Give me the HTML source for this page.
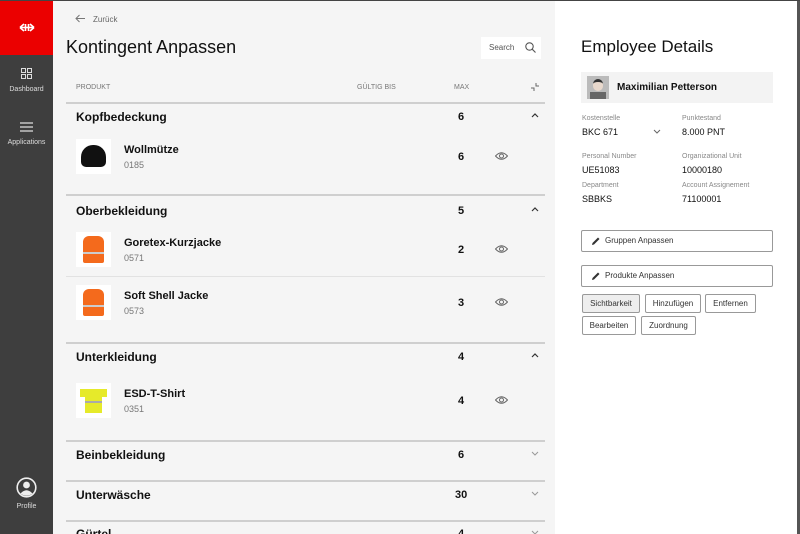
<!DOCTYPE html>
<html><head><meta charset="utf-8"><style>
*{margin:0;padding:0;box-sizing:border-box}
html{width:800px;height:534px;overflow:hidden;background:#f5f5f5}
body{width:800px;height:534px;overflow:hidden;position:relative;font-family:"Liberation Sans",sans-serif;background:#f5f5f5;color:#111}
.a{position:absolute}
.side{left:0;top:0;width:53px;height:534px;background:#3e3e3e}
.red{left:0;top:0;width:53px;height:55px;background:#eb0000}
.nav{width:53px;text-align:center;color:#ddd;font-size:7px}
.main{left:53px;top:0;width:502px;height:534px;background:#f5f5f5}
.right{left:555px;top:0;width:242px;height:534px;background:#fff}
.line{left:66px;width:479px;height:2px;background:#cfcfcf}
.thin{left:66px;width:479px;height:1px;background:#e2e2e2}
.g{font-size:12px;font-weight:bold;left:76px}
.n{font-size:11px;font-weight:bold}
.num{font-size:11px;font-weight:bold;left:458px}
.code{font-size:9px;color:#777;left:124px}
.img{left:76px;width:35px;height:35px;background:#fff}
.lbl{font-size:7px;color:#888}
.val{font-size:9px;color:#111}
.btn{border:1px solid #999;border-radius:2px;background:#fff;font-size:8px;color:#333;text-align:center;line-height:17px;height:19px}
</style></head><body>
<div class="a side"></div>
<div class="a red"></div>
<svg class="a" style="left:19px;top:23px" width="16" height="9" viewBox="0 0 16 9"><path d="M1 4.5L5 1M1 4.5L5 8M15 4.5L11 1M15 4.5L11 8M1 4.5H15M6.5 1V8M9.5 1V8" stroke="#fff" stroke-width="1.6" fill="none"/></svg>
<svg class="a" style="left:21px;top:68px" width="11" height="11" viewBox="0 0 11 11" fill="none" stroke="#ddd" stroke-width="1"><rect x=".5" y=".5" width="4" height="4"/><rect x="6.5" y=".5" width="4" height="4"/><rect x=".5" y="6.5" width="4" height="4"/><rect x="6.5" y="6.5" width="4" height="4"/></svg>
<div class="a nav" style="top:86px">Dashboard</div>
<svg class="a" style="left:20px;top:122px" width="13" height="10" viewBox="0 0 13 10" stroke="#ddd" stroke-width="1.2"><path d="M0 1H13M0 5H13M0 9H13"/></svg>
<div class="a nav" style="top:139px">Applications</div>
<svg class="a" style="left:16px;top:477px" width="21" height="21" viewBox="0 0 21 21"><circle cx="10.5" cy="10.5" r="9.3" fill="none" stroke="#eee" stroke-width="1.6"/><circle cx="10.5" cy="8" r="3.4" fill="#eee"/><path d="M4.5 16.5Q10.5 10 16.5 16.5Q10.5 21 4.5 16.5Z" fill="#eee"/></svg>
<div class="a nav" style="top:503px">Profile</div>
<div class="a main"></div>
<div class="a right"></div>
<div class="a" style="left:797px;top:0;width:3px;height:534px;background:#555"></div>
<div class="a" style="left:0;top:0;width:800px;height:1px;background:#444"></div>

<svg class="a" style="left:75px;top:14px" width="10" height="9" viewBox="0 0 10 9" fill="none" stroke="#777" stroke-width="1"><path d="M10 4.5H1M4.5 1L1 4.5L4.5 8"/></svg>
<div class="a" style="left:93px;top:15px;font-size:8px;color:#666">Zurück</div>
<div class="a" style="left:66px;top:37px;font-size:18px;color:#111">Kontingent Anpassen</div>
<div class="a" style="left:481px;top:37px;width:60px;height:22px;background:#fff"></div>
<div class="a" style="left:489px;top:43px;font-size:8px;color:#555">Search</div>
<svg class="a" style="left:525px;top:42px" width="11" height="11" viewBox="0 0 11 11" fill="none" stroke="#555" stroke-width="1.1"><circle cx="4.5" cy="4.5" r="3.7"/><path d="M7.2 7.2L10.5 10.5"/></svg>
<div class="a lbl" style="left:76px;top:84px;color:#777">PRODUKT</div>
<div class="a lbl" style="left:357px;top:84px;color:#777">GÜLTIG BIS</div>
<div class="a lbl" style="left:454px;top:84px;color:#777">MAX</div>
<svg class="a" style="left:531px;top:83px" width="8" height="8" viewBox="0 0 8 8" fill="none" stroke="#666" stroke-width="1"><path d="M0 5H3V8M5 0V3H8"/></svg>
<div class="a line" style="top:102px"></div>

<div class="a g" style="top:110px">Kopfbedeckung</div><div class="a num" style="top:111px">6</div>
<div class="a img" style="top:139px"><div style="position:absolute;left:5px;top:6px;width:25px;height:22px;background:#111;border-radius:12px 12px 5px 5px"></div></div>
<div class="a n" style="left:124px;top:144px">Wollmütze</div><div class="a code" style="top:160px">0185</div><div class="a num" style="top:151px">6</div>
<div class="a line" style="top:194px"></div>

<div class="a g" style="top:204px">Oberbekleidung</div><div class="a num" style="top:205px">5</div>
<div class="a img" style="top:232px"><div style="position:absolute;left:7px;top:4px;width:21px;height:27px;background:#f46a1c;border-radius:6px 6px 2px 2px"></div><div style="position:absolute;left:7px;top:20px;width:21px;height:2px;background:#ccc"></div></div>
<div class="a n" style="left:124px;top:237px">Goretex-Kurzjacke</div><div class="a code" style="top:253px">0571</div><div class="a num" style="top:244px">2</div>
<div class="a thin" style="top:276px"></div>
<div class="a img" style="top:285px"><div style="position:absolute;left:7px;top:4px;width:21px;height:27px;background:#f46a1c;border-radius:6px 6px 2px 2px"></div><div style="position:absolute;left:7px;top:20px;width:21px;height:2px;background:#ccc"></div></div>
<div class="a n" style="left:124px;top:290px">Soft Shell Jacke</div><div class="a code" style="top:306px">0573</div><div class="a num" style="top:297px">3</div>
<div class="a line" style="top:342px"></div>

<div class="a g" style="top:350px">Unterkleidung</div><div class="a num" style="top:351px">4</div>
<div class="a img" style="top:383px"><div style="position:absolute;left:4px;top:6px;width:27px;height:8px;background:#e6ea2a"></div><div style="position:absolute;left:9px;top:6px;width:17px;height:24px;background:#e6ea2a"></div><div style="position:absolute;left:9px;top:18px;width:17px;height:2px;background:#aaa"></div></div>
<div class="a n" style="left:124px;top:388px">ESD-T-Shirt</div><div class="a code" style="top:404px">0351</div><div class="a num" style="top:395px">4</div>
<div class="a line" style="top:440px"></div>

<div class="a g" style="top:448px">Beinbekleidung</div><div class="a num" style="top:449px">6</div>
<div class="a line" style="top:480px"></div>
<div class="a g" style="top:488px">Unterwäsche</div><div class="a num" style="top:489px;left:455px">30</div>
<div class="a line" style="top:520px"></div>
<div class="a g" style="top:527px">Gürtel</div><div class="a num" style="top:528px">4</div>

<svg class="a" style="left:531px;top:113px" width="8" height="5" viewBox="0 0 8 5" fill="none" stroke="#333" stroke-width="1.2"><path d="M1 4L4 1L7 4"/></svg>
<svg class="a" style="left:531px;top:207px" width="8" height="5" viewBox="0 0 8 5" fill="none" stroke="#333" stroke-width="1.2"><path d="M1 4L4 1L7 4"/></svg>
<svg class="a" style="left:531px;top:353px" width="8" height="5" viewBox="0 0 8 5" fill="none" stroke="#333" stroke-width="1.2"><path d="M1 4L4 1L7 4"/></svg>
<svg class="a" style="left:531px;top:451px" width="8" height="5" viewBox="0 0 8 5" fill="none" stroke="#999" stroke-width="1"><path d="M1 1L4 4L7 1"/></svg>
<svg class="a" style="left:531px;top:491px" width="8" height="5" viewBox="0 0 8 5" fill="none" stroke="#999" stroke-width="1"><path d="M1 1L4 4L7 1"/></svg>
<svg class="a" style="left:531px;top:530px" width="8" height="5" viewBox="0 0 8 5" fill="none" stroke="#999" stroke-width="1"><path d="M1 1L4 4L7 1"/></svg>

<svg class="a" style="left:495px;top:152px" width="13" height="8" viewBox="0 0 13 8" fill="none" stroke="#666" stroke-width="1"><path d="M.5 4Q6.5 -2.5 12.5 4Q6.5 10.5 .5 4Z"/><circle cx="6.5" cy="4" r="2"/></svg>
<svg class="a" style="left:495px;top:245px" width="13" height="8" viewBox="0 0 13 8" fill="none" stroke="#666" stroke-width="1"><path d="M.5 4Q6.5 -2.5 12.5 4Q6.5 10.5 .5 4Z"/><circle cx="6.5" cy="4" r="2"/></svg>
<svg class="a" style="left:495px;top:298px" width="13" height="8" viewBox="0 0 13 8" fill="none" stroke="#666" stroke-width="1"><path d="M.5 4Q6.5 -2.5 12.5 4Q6.5 10.5 .5 4Z"/><circle cx="6.5" cy="4" r="2"/></svg>
<svg class="a" style="left:495px;top:396px" width="13" height="8" viewBox="0 0 13 8" fill="none" stroke="#666" stroke-width="1"><path d="M.5 4Q6.5 -2.5 12.5 4Q6.5 10.5 .5 4Z"/><circle cx="6.5" cy="4" r="2"/></svg>

<div class="a" style="left:581px;top:37px;font-size:17px;color:#111">Employee Details</div>
<div class="a" style="left:581px;top:72px;width:192px;height:31px;background:#f3f3f3"></div>
<div class="a" style="left:587px;top:76px;width:22px;height:23px;background:#bbb"><div style="position:absolute;left:6px;top:3px;width:10px;height:12px;border-radius:5px;background:#e8d8cc;border-top:3px solid #333"></div><div style="position:absolute;left:3px;top:16px;width:16px;height:7px;background:#666"></div></div>
<div class="a" style="left:617px;top:82px;font-size:10px;font-weight:bold">Maximilian Petterson</div>
<div class="a lbl" style="left:582px;top:115px">Kostenstelle</div><div class="a val" style="left:582px;top:127px">BKC 671</div>
<svg class="a" style="left:653px;top:129px" width="8" height="5" viewBox="0 0 8 5" fill="none" stroke="#666" stroke-width="1"><path d="M1 1L4 4L7 1"/></svg>
<div class="a lbl" style="left:682px;top:115px">Punktestand</div><div class="a val" style="left:682px;top:127px">8.000 PNT</div>
<div class="a lbl" style="left:582px;top:153px">Personal Number</div><div class="a val" style="left:582px;top:165px">UE51083</div>
<div class="a lbl" style="left:682px;top:153px">Organizational Unit</div><div class="a val" style="left:682px;top:165px">10000180</div>
<div class="a lbl" style="left:582px;top:182px">Department</div><div class="a val" style="left:582px;top:194px">SBBKS</div>
<div class="a lbl" style="left:682px;top:182px">Account Assignement</div><div class="a val" style="left:682px;top:194px">71100001</div>
<div class="a btn" style="left:581px;top:230px;width:192px;height:22px;line-height:20px;text-align:left;padding-left:23px">Gruppen Anpassen</div>
<div class="a btn" style="left:581px;top:265px;width:192px;height:22px;line-height:20px;text-align:left;padding-left:23px">Produkte Anpassen</div>
<svg class="a" style="left:592px;top:237px" width="8" height="8" viewBox="0 0 8 8"><path d="M0 8L.5 6L6 .5L7.5 2L2 7.5Z" fill="#333"/></svg>
<svg class="a" style="left:592px;top:272px" width="8" height="8" viewBox="0 0 8 8"><path d="M0 8L.5 6L6 .5L7.5 2L2 7.5Z" fill="#333"/></svg>
<div class="a btn" style="left:582px;top:294px;width:58px;background:#eee">Sichtbarkeit</div>
<div class="a btn" style="left:645px;top:294px;width:56px">Hinzufügen</div>
<div class="a btn" style="left:705px;top:294px;width:51px">Entfernen</div>
<div class="a btn" style="left:582px;top:316px;width:54px">Bearbeiten</div>
<div class="a btn" style="left:641px;top:316px;width:55px">Zuordnung</div>
</body></html>
